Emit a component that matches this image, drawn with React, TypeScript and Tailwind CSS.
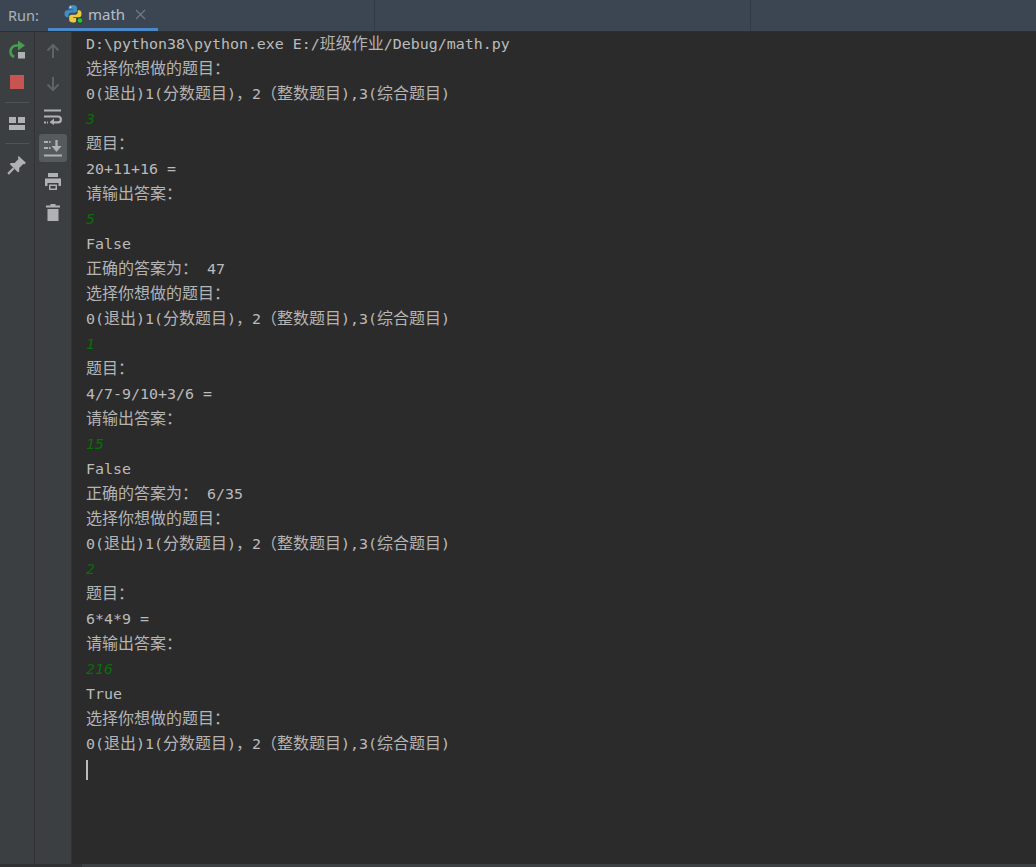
import React from "react";

type Line = { t: string; input?: boolean };
const menu = "0(退出)1(分数题目)，2（整数题目),3(综合题目)";
const pick = "选择你想做的题目：";
const lines: Line[] = [
  { t: "D:\\python38\\python.exe E:/班级作业/Debug/math.py" },
  { t: pick }, { t: menu }, { t: "3", input: true },
  { t: "题目：" }, { t: "20+11+16 =" }, { t: "请输出答案：" }, { t: "5", input: true },
  { t: "False" }, { t: "正确的答案为： 47" }, { t: pick }, { t: menu }, { t: "1", input: true },
  { t: "题目：" }, { t: "4/7-9/10+3/6 =" }, { t: "请输出答案：" }, { t: "15", input: true },
  { t: "False" }, { t: "正确的答案为： 6/35" }, { t: pick }, { t: menu }, { t: "2", input: true },
  { t: "题目：" }, { t: "6*4*9 =" }, { t: "请输出答案：" }, { t: "216", input: true },
  { t: "True" }, { t: pick }, { t: menu },
];

function Text({ s }: { s: string }) {
  const parts = s.split(/([^\x00-\x7f]+)/);
  return (
    <>
      {parts.map((p, i) =>
        i % 2 === 1 ? (
          <span key={i} className="text-[16px] leading-none text-[#b4b4b4] font-['Noto_Sans_CJK_SC',sans-serif]">{p}</span>
        ) : (
          <span key={i} className="whitespace-pre">{p}</span>
        ),
      )}
    </>
  );
}

function Python() {
  return (
    <svg width="18" height="20" viewBox="0 0 18 20" className="shrink-0">
      <path d="M8.7 1C5.5 1 4.6 2.2 4.6 3.6V5.6H9V6.3H3C1.4 6.3 .5 7.6 .5 9.6S1.4 13.2 3 13.2H4.5V11.2C4.5 9.8 5.6 8.8 7 8.8H10.8C12 8.8 13 7.8 13 6.6V3.4C13 2 11.6 1 8.7 1Z" fill="#3f8fc4" />
      <circle cx="6.5" cy="3.2" r=".9" fill="#dfe8ee" />
      <path d="M13.7 6.3V8.3C13.7 9.8 12.6 10.7 11.2 10.7H7.4C6.2 10.7 5.2 11.7 5.2 12.9V16C5.2 17.5 6.6 18.3 9 18.5C10.5 18.5 11.5 18 12 17.4V13.9H9.2V13.2H15.2C16.7 13.2 17.5 11.9 17.5 9.8S16.7 6.3 15.2 6.3Z" fill="#f0c93a" />
      <circle cx="16" cy="16.5" r="3" fill="#2f3c49" />
      <circle cx="16" cy="16.5" r="2.2" fill="#19d219" />
    </svg>
  );
}

const Sep = () => <div className="h-px w-[24px] shrink-0 bg-[#515456]" />;

function Slot({ h, children }: { h: number; children: React.ReactNode }) {
  return <div style={{ height: h }} className="flex w-full items-center justify-center shrink-0">{children}</div>;
}

export default function App() {
  return (
    <div className="flex h-[867px] w-[1036px] flex-col overflow-hidden bg-[#2b2b2b] font-['DejaVu_Sans_Mono',monospace] text-[#bbbbbb]">
      <div className="flex h-[32px] shrink-0 items-stretch bg-[#3c4653] border-b border-[#2e2f30] font-['Noto_Sans','Open_Sans',sans-serif] text-[14.5px] text-[#a9b3bd]">
        <div className="flex w-[48px] shrink-0 items-center pl-[8px]">Run:</div>
        <div className="relative flex w-[110px] shrink-0 items-center pl-[16px] pb-[3px]">
          <Python />
          <span className="ml-[6px] text-[#b5bfc9] text-[15px]">math</span>
          <svg width="11" height="11" viewBox="0 0 11 11" className="ml-[10px]">
            <path d="M1 1L10 10M10 1L1 10" stroke="#6f7a85" strokeWidth="1.2" />
          </svg>
          <div className="absolute bottom-0 left-0 right-0 h-[3px] bg-[#4a88c7]" />
        </div>
        <div className="w-[217px] shrink-0 border-r border-[#2f3a45]" />
        <div className="w-[376px] shrink-0 border-r border-[#2f3a45]" />
      </div>
      <div className="flex min-h-0 flex-1">
        <div className="flex w-[35px] shrink-0 flex-col items-center border-r border-[#323232] bg-[#3c3f41] pt-[2px]">
          <Slot h={32}>
            <svg width="20" height="20" viewBox="0 0 20 20">
              <path d="M16 5.500H9.500A6 6 0 0 0 3.500 11.500A6 6 0 0 0 7 17" fill="none" stroke="#499c54" strokeWidth="2.500" />
              <path d="M11 0.500L18 5.500L11 10.500Z" fill="#499c54" />
              <rect x="11" y="12" width="7" height="6.500" fill="#afb1b3" />
            </svg>
          </Slot>
          <Slot h={32}><div className="h-[14px] w-[14px] bg-[#c75450]" /></Slot>
          <Slot h={4}><span /></Slot>
          <Sep />
          <Slot h={40}>
            <svg width="16" height="13" viewBox="0 0 16 13">
              <path d="M0 0H7V6H0ZM9 0H16V6H9ZM0 8H16V13H0Z" fill="#afb1b3" />
            </svg>
          </Slot>
          <Sep />
          <Slot h={41}>
            <svg width="20" height="20" viewBox="0 0 18 18">
              <path d="M10.500 1L17 7L15.800 8.400L14.600 8L11 11.600L11 15L9.800 15.600L2.600 8.400L3.200 7.200L6.800 7.200L10.400 3.600L9.800 2.200Z" fill="#afb1b3" />
              <path d="M6 12L1 17" stroke="#afb1b3" strokeWidth="2" />
            </svg>
          </Slot>
        </div>
        <div className="flex w-[37px] shrink-0 flex-col items-center border-r border-[#323232] bg-[#3c3f41] pt-[3px]">
          <Slot h={32}>
            <svg width="14" height="16" viewBox="0 0 14 16"><path d="M7 15V2M1.500 7.500L7 2L12.500 7.500" fill="none" stroke="#5f6365" strokeWidth="2" /></svg>
          </Slot>
          <Slot h={33}>
            <svg width="14" height="16" viewBox="0 0 14 16"><path d="M7 1V14M1.500 8.500L7 14L12.500 8.500" fill="none" stroke="#5f6365" strokeWidth="2" /></svg>
          </Slot>
          <Slot h={33}>
            <svg width="18" height="16" viewBox="0 0 18 16">
              <path d="M0 1.500H17M0 7.500H14A2.800 2.800 0 0 1 14 13.300H9" fill="none" stroke="#afb1b3" strokeWidth="2.200" />
              <path d="M10 9.500L5.500 13.300L10 16Z" fill="#afb1b3" />
              <path d="M0 13.500H4" stroke="#afb1b3" strokeWidth="2" strokeDasharray="2 1" />
            </svg>
          </Slot>
          <div className="mt-[1px] flex h-[28px] w-[28px] shrink-0 items-center justify-center rounded-[3px] bg-[#555a5d]">
            <svg width="18" height="17" viewBox="0 0 18 17">
              <path d="M0 2H4M5 2H6.500M0 8H4M5 8H6.500M0 15.500H18" stroke="#afb1b3" strokeWidth="2" />
              <path d="M12.500 0V8" stroke="#afb1b3" strokeWidth="2.400" />
              <path d="M7.500 6L12.500 12L17.500 6Z" fill="#afb1b3" />
            </svg>
          </div>
          <Slot h={39}>
            <svg width="18" height="18" viewBox="0 0 18 18">
              <path d="M4 0H14V4H4ZM1 5.500H17V13H14.500V10H3.500V13H1ZM5 11.500H13V17H5ZM6.500 13V15.500H11.500V13Z" fill="#afb1b3" fillRule="evenodd" />
            </svg>
          </Slot>
          <Slot h={22}>
            <svg width="14" height="17" viewBox="0 0 14 17">
              <path d="M4.500 0H9.500V1.500H14V3.500H0V1.500H4.500ZM1.500 5H12.500V17H1.500Z" fill="#afb1b3" />
            </svg>
          </Slot>
        </div>
        <div className="min-w-0 flex-1 pl-[14px] text-[14.95px] leading-[25px]">
          {lines.map((l, i) => (
            <div key={i} className={l.input ? "h-[25px] italic text-[#066f06]" : "h-[25px]"}>
              <Text s={l.t} />
            </div>
          ))}
          <div className="flex h-[25px] items-center"><div className="h-[20px] w-[2px] bg-[#bbbbbb]" /></div>
        </div>
      </div>
      <div className="flex h-[3px] shrink-0 bg-[#3c3f41]"><div className="w-[82px] bg-[#2f3133]" /></div>
    </div>
  );
}
